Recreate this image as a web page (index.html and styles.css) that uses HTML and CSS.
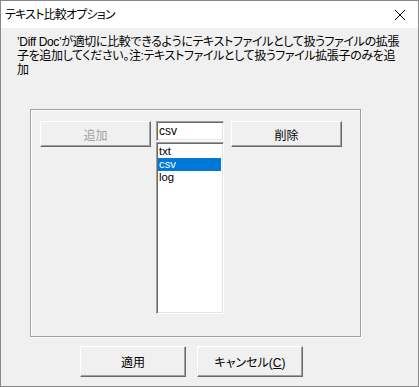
FILE: index.html
```html
<!DOCTYPE html>
<html lang="ja">
<head>
<meta charset="utf-8">
<link rel="stylesheet" href="styles.css">
</head>
<body>
<div class="window">
  <div class="titlebar">
    <span class="title">テキスト比較オプション</span>
    <svg class="close" width="12" height="12" viewBox="0 0 12 12"><path d="M1 1L11 11M11 1L1 11" stroke="#000" stroke-width="1" fill="none"/></svg>
  </div>
  <div class="content">
    <div class="desc">
      <div class="line l1">’Diff Doc’が適切に比較できるようにテキストファイルとして扱うファイルの拡張</div>
      <div class="line l2">子を追加してください。注:テキストファイルとして扱うファイル拡張子のみを追</div>
      <div class="line">加</div>
    </div>
    <div class="group">
      <button class="btn btn-top disabled">追加</button>
      <div class="mid">
        <div class="edit">csv</div>
        <ul class="list">
          <li>txt</li>
          <li class="sel">csv</li>
          <li>log</li>
        </ul>
      </div>
      <button class="btn btn-top">削除</button>
    </div>
    <div class="footer">
      <button class="btn btn-foot">適用</button>
      <button class="btn btn-foot">キャンセル(<u>C</u>)</button>
    </div>
  </div>
</div>
</body>
</html>
```

FILE: styles.css
```css
* { box-sizing: border-box; }
html, body { margin: 0; padding: 0; background: #f0f0f0; }
body {
  font-family: "Liberation Sans", "Noto Sans CJK JP", sans-serif;
  font-size: 12px;
  font-feature-settings: "palt";
  color: #000;
}
.window {
  width: 419px;
  height: 387px;
  border: 1px solid #888;
  background: #f0f0f0;
  display: flex;
  flex-direction: column;
}
.titlebar {
  height: 27px;
  background: #fff;
  display: flex;
  align-items: center;
  justify-content: space-between;
  padding: 0 12px 0 4px;
}
.title { font-size: 12px; line-height: 14px; letter-spacing: -0.8px; }
.close { display: block; }
.content {
  flex: 1;
  padding: 7px 0 0 16px;
  display: flex;
  flex-direction: column;
}
.desc {
  white-space: nowrap;
  font-size: 12px;
}
.line { height: 14px; line-height: 14px; }
.l1 { letter-spacing: -0.35px; }
.l2 { letter-spacing: -0.37px; }
.group {
  margin: 32px 0 0 13px;
  width: 331px;
  height: 228px;
  border: 1px solid #a0a0a0;
  box-shadow: inset 1px 1px 0 #fff, 1px 1px 0 #fff;
  display: flex;
  align-items: flex-start;
  padding: 11px 0 0 9px;
}
.btn {
  font-family: inherit;
  font-size: 12px;
  font-feature-settings: "palt";
  background: #f0f0f0;
  color: #000;
  border: 1px solid;
  border-color: #fff #696969 #696969 #fff;
  box-shadow: inset -1px -1px 0 #a0a0a0;
  padding: 0;
  margin: 0;
}
.btn u { text-decoration: underline; }
.btn-top { width: 111px; height: 26px; }
.disabled { color: #a0a0a0; }
.mid {
  width: 68px;
  margin: 0 7px 0 5px;
  display: flex;
  flex-direction: column;
  gap: 1px;
}
.edit, .list {
  background: #fff;
  border: 1px solid;
  border-color: #a0a0a0 #fff #fff #a0a0a0;
  box-shadow: inset 1px 1px 0 #696969, inset -1px -1px 0 #e3e3e3;
}
.edit {
  height: 20px;
  padding: 2px 0 0 2px;
  line-height: 14px;
}
.list {
  height: 172px;
  margin: 0;
  padding: 2px 2px 0 1px;
  list-style: none;
  font-size: 11.3px;
}
.list li {
  height: 13px;
  line-height: 13px;
  padding-left: 1px;
}
.list li.sel { background: #0078d7; color: #fff; }
.footer {
  display: flex;
  gap: 11px;
  margin: 9px 0 0 63px;
}
.btn-foot { width: 106px; height: 31px; }
```
